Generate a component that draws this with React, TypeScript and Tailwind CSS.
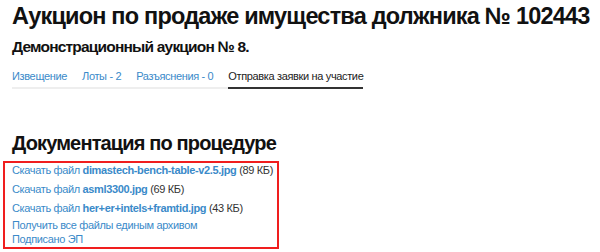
const files = [
  { name: 'dimastech-bench-table-v2.5.jpg', size: '89 КБ' },
  { name: 'asml3300.jpg', size: '69 КБ' },
  { name: 'her+er+intels+framtid.jpg', size: '43 КБ' },
];

const tabs = ['Извещение', 'Лоты - 2', 'Разъяснения - 0'];

export default function App() {
  return (
    <div className="min-h-screen bg-white pl-3 pt-[1px] whitespace-nowrap text-[#111] font-[family-name:Liberation_Sans,Arial,sans-serif]">
      <h1 className="text-[23.5px] leading-[30px] font-bold tracking-[-0.8px]">
        Аукцион по продаже имущества должника № 102443
      </h1>
      <h2 className="mt-[5px] text-[15.5px] leading-[22px] font-bold tracking-[-0.8px]">
        Демонстрационный аукцион № 8.
      </h2>

      <div className="mt-[11px] inline-flex gap-[15px] border-b-2 border-[#eeeeee] text-[11px] leading-[14px] tracking-[-0.35px]">
        {tabs.map((t) => (
          <a key={t} href="#" className="pb-[4px] text-[#3a8ac9]">
            {t}
          </a>
        ))}
        <span className="-mb-[2px] border-b-2 border-[#333] pb-[4px] text-[#222]">Отправка заявки на участие</span>
      </div>

      <h3 className="mt-[42px] text-[20px] leading-[24px] font-bold tracking-[-0.85px]">Документация по процедуре</h3>

      <div className="-ml-[9px] mt-[6px] flex w-[276px] flex-col border-2 border-[#f01e1e] pb-[1px] pl-[7px] text-[11px] leading-[14px] tracking-[-0.35px]">
        {files.map((f, i) => (
          <div key={f.name} className={i === 2 ? 'mb-[3px]' : 'mb-[5px]'}>
            <a href="#" className="text-[#3a8ac9]">
              Скачать файл <b>{f.name}</b>
            </a>{' '}
            <span className="text-[#333]">({f.size})</span>
          </div>
        ))}
        <a href="#" className="text-[#3a8ac9]">Получить все файлы единым архивом</a>
        <a href="#" className="text-[#3a8ac9]">Подписано ЭП</a>
      </div>
    </div>
  );
}
